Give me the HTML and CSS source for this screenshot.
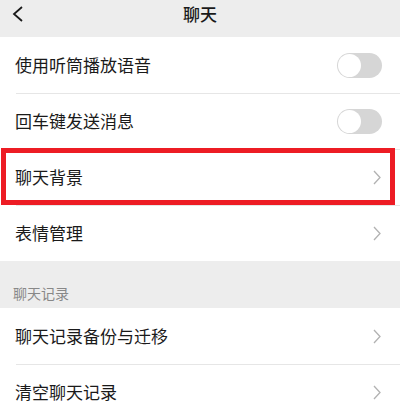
FILE: index.html
```html
<!DOCTYPE html>
<html lang="zh-CN">
<head>
<meta charset="utf-8">
<link rel="stylesheet" href="styles.css">
</head>
<body>
<div class="header">
  <svg class="back" width="12" height="16" viewBox="0 0 12 16"><polyline points="10,1 2,8 10,15" fill="none" stroke="#1a1a1a" stroke-width="1.8" stroke-linejoin="miter"/></svg>
  <div class="title">聊天</div>
</div>
<div class="group">
  <div class="row"><span class="label">使用听筒播放语音</span><span class="toggle"><span class="knob"></span></span></div>
  <div class="row"><span class="label">回车键发送消息</span><span class="toggle"><span class="knob"></span></span></div>
  <div class="row highlight"><span class="label">聊天背景</span><svg class="chev" width="8" height="15" viewBox="0 0 8 15"><polyline points="1,1 7,7.5 1,14" fill="none" stroke="#b2b2b2" stroke-width="1.3"/></svg><span class="mark"></span></div>
  <div class="row"><span class="label">表情管理</span><svg class="chev" width="8" height="15" viewBox="0 0 8 15"><polyline points="1,1 7,7.5 1,14" fill="none" stroke="#b2b2b2" stroke-width="1.3"/></svg></div>
</div>
<div class="section">聊天记录</div>
<div class="group">
  <div class="row"><span class="label">聊天记录备份与迁移</span><svg class="chev" width="8" height="15" viewBox="0 0 8 15"><polyline points="1,1 7,7.5 1,14" fill="none" stroke="#b2b2b2" stroke-width="1.3"/></svg></div>
  <div class="row"><span class="label">清空聊天记录</span><svg class="chev" width="8" height="15" viewBox="0 0 8 15"><polyline points="1,1 7,7.5 1,14" fill="none" stroke="#b2b2b2" stroke-width="1.3"/></svg></div>
</div>
</body>
</html>
```
FILE: styles.css
```css
html, body {
  margin: 0;
  padding: 0;
  background: #ffffff;
  font-family: "Noto Sans CJK SC", "Noto Sans", sans-serif;
  overflow: hidden;
}
.header {
  height: 28px;
  padding-bottom: 9px;
  background: #ededed;
  position: relative;
  display: flex;
  align-items: center;
  justify-content: center;
}
.back {
  position: absolute;
  left: 12px;
  top: 6px;
}
.title {
  font-size: 17px;
  font-weight: 500;
  color: #1a1a1a;
  line-height: 28px;
}
.group {
  background: #ffffff;
}
.row {
  height: 56px;
  display: flex;
  align-items: center;
  justify-content: space-between;
  padding: 0 18px 0 15px;
  position: relative;
}
.row + .row::before {
  content: "";
  position: absolute;
  left: 16px;
  right: 0;
  top: 0;
  height: 1px;
  background: #e6e6e6;
}
.label {
  font-size: 17px;
  color: #1a1a1a;
  line-height: 24px;
}
.toggle {
  width: 45px;
  height: 25px;
  border-radius: 13px;
  background: #d6d6d6;
  position: relative;
  display: block;
}
.knob {
  position: absolute;
  left: 1px;
  top: 1px;
  width: 23px;
  height: 23px;
  border-radius: 50%;
  background: #ffffff;
}
.chev {
  margin-right: 1px;
  display: block;
}
.section {
  background: #ededed;
  height: 47px;
  box-sizing: border-box;
  padding: 22px 0 0 13px;
  font-size: 14px;
  line-height: 20px;
  color: #888888;
}
.mark {
  position: absolute;
  left: 1px;
  right: 5px;
  top: -1px;
  bottom: 0;
  border: 5px solid #ed1c24;
  z-index: 2;
}
```
